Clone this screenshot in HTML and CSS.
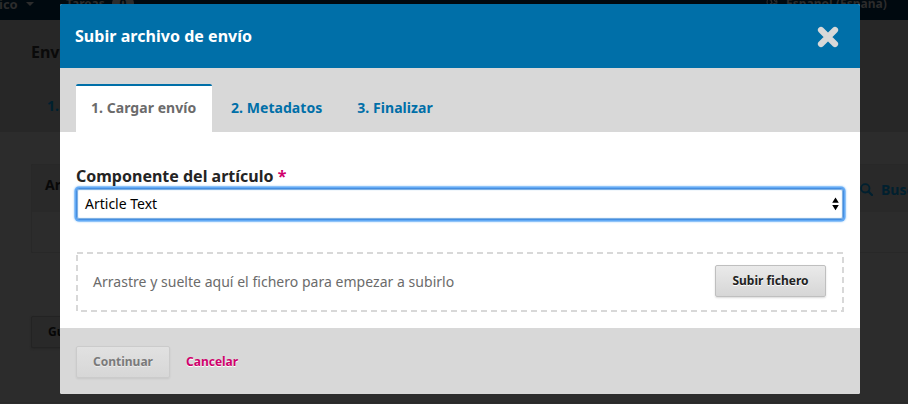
FILE: index.html
```html
<!DOCTYPE html>
<html lang="es">
<head>
<meta charset="utf-8">
<title>Subir archivo de envío</title>
<link rel="stylesheet" href="styles.css">
</head>
<body>
<div class="page">
  <nav class="topbar">
    <span class="site">ico</span><span class="caret"></span>
    <span class="tasks">Tareas</span><span class="count">0</span>
    <svg class="globe" viewBox="0 0 12 12" width="12" height="12"><circle cx="6" cy="6" r="5" fill="none" stroke="currentColor" stroke-width="1"/><path d="M2 3l3 1 1 3-2 1M7 2l2 3 2 1M7 8l3-1" fill="none" stroke="currentColor" stroke-width="1.3"/></svg>
    <span class="lang">Español (España)</span>
  </nav>
  <header class="page-head">
    <h1>Env</h1>
    <div class="page-tab">1.</div>
  </header>
  <main class="page-main">
    <section class="panel">
      <div class="panel-head">
        <h2>Ar</h2>
        <span class="search"><svg viewBox="0 0 13 13" width="13" height="13"><circle cx="5.3" cy="5.3" r="4.2" fill="none" stroke="currentColor" stroke-width="1.8"/><path d="M8.5 8.5L12 12" stroke="currentColor" stroke-width="2.2" stroke-linecap="round"/></svg>Buscar</span>
      </div>
    </section>
    <div class="save">Gu</div>
  </main>
</div>
<div class="modal" role="dialog">
  <header class="modal-head">
    <h2>Subir archivo de envío</h2>
    <svg class="close" viewBox="0 0 22 22" width="22" height="22"><path d="M4 4L18 18M18 4L4 18" stroke="currentColor" stroke-width="6.2" stroke-linecap="round"/></svg>
  </header>
  <nav class="tabs">
    <a class="tab active">1. Cargar envío</a>
    <a class="tab">2. Metadatos</a>
    <a class="tab">3. Finalizar</a>
  </nav>
  <div class="content">
    <label class="label">Componente del artículo <span class="req">*</span></label>
    <div class="select"><span>Article Text</span><svg viewBox="0 0 7 14" width="7" height="14"><path d="M3.5 .5L6.8 5.7H.2zM3.5 13.3L.2 8.1h6.6z" fill="#000"/></svg></div>
    <div class="drop">
      <svg class="dash" width="768" height="60"><rect x="1" y="1" width="766" height="58" fill="none" stroke="#d8d8d8" stroke-width="2" stroke-dasharray="6 4"/></svg>
      <span class="hint">Arrastre y suelte aquí el fichero para empezar a subirlo</span>
      <span class="button upload">Subir fichero</span>
    </div>
  </div>
  <footer class="actions">
    <span class="button continue">Continuar</span>
    <a class="cancel">Cancelar</a>
  </footer>
</div>
</body>
</html>
```
FILE: styles.css
```css
* { box-sizing: border-box; }
body { margin: 0; width: 908px; height: 404px; overflow: hidden; background: #2c2c2c; font-family: "Noto Sans", sans-serif; }
h1, h2 { margin: 0; }
.topbar { height: 20px; background: #00090f; color: #2c2c2c; display: flex; font-size: 12px; font-weight: 700; line-height: 20px; overflow: hidden; }
.topbar > * { flex: none; margin-top: -6px; }
.site { width: 26px; font-size: 13px; text-indent: -1px; }
.topbar .caret { margin-top: 2px; width: 8px; height: 4px; border: 4px solid transparent; border-top-color: #2c2c2c; border-bottom: 0; }
.tasks { margin-left: 32px; width: 40px; }
.count { margin-left: 6px; width: 22px; height: 17px; margin-top: -5px !important; border-radius: 9px; background: #2c2c2c; color: #00090f; text-align: center; line-height: 17px; }
.globe { margin: -4px 8px 0 632px; }
.lang { white-space: nowrap; letter-spacing: .05px; }
.page-head { height: 112px; background: #272727; padding: 22px 0 0 31px; overflow: hidden; }
.page-head h1 { font-size: 16px; line-height: 20px; color: #0a0a0a; }
.page-tab { margin: 34px 0 0 16px; font-size: 14px; line-height: 20px; font-weight: 700; color: #00202f; }
.page-main { height: 271px; padding: 32px 0 0 31px; overflow: hidden; border-bottom: 1px solid #292929; }
.panel { height: 89px; border: 1px solid #282828; border-right: 0; border-radius: 2px 0 0 2px; }
.panel-head { height: 47px; background: #292929; display: flex; align-items: center; justify-content: space-between; padding-left: 13px; overflow: hidden; }
.panel-head h2 { font-size: 14px; line-height: 20px; color: #080808; margin-top: -8px; }
.search { display: flex; align-items: center; gap: 8px; width: 48px; flex: none; color: #00202f; font-size: 14px; font-weight: 700; margin-top: 1px; }
.search svg { flex: none; }
.save { margin-top: 63px; width: 90px; height: 32px; border: 1px solid #232323; border-radius: 2px; background: #292929; padding-left: 16px; font-size: 12px; line-height: 30px; font-weight: 700; color: #060606; box-shadow: 0 1px 2px #262626; }

.modal { position: absolute; left: 60px; top: 4px; width: 800px; height: 390px; background: #fff; border-radius: 2px; overflow: hidden; }
.modal-head { height: 64px; background: #006fa8; color: #fff; padding: 0 21px 0 15px; display: flex; align-items: center; justify-content: space-between; }
.modal-head h2 { font-size: 16px; line-height: 24px; letter-spacing: .04px; }
.close { color: #d8d8d8; margin-top: 1px; }
.tabs { height: 64px; background: #d8d8d8; padding: 16px 16px 0; display: flex; }
.tab { height: 48px; padding: 2px 16px 0; line-height: 44px; font-size: 14px; font-weight: 700; color: #006fa8; white-space: nowrap; letter-spacing: .05px; }
.tab + .tab { margin-left: 3px; }
.active { width: 136px; padding: 0 15px; border-top: 2px solid #006fa8; border-radius: 2px 2px 0 0; background: #fff; color: #6b6b6b; }
.content { height: 196px; padding: 33px 16px 0; }
.label { display: block; font-size: 16px; line-height: 22px; font-weight: 700; color: #242424; white-space: nowrap; }
.req { color: #d0006c; }
.select { margin-top: 1px; height: 32px; border: 1px solid #468ee0; border-radius: 3px; background: #fff; box-shadow: 0 0 0 1.5px #63aaf5, 0 0 2px 2px #a5d0fa, inset 0 0 1px 1px #72a9e2; display: flex; align-items: center; justify-content: space-between; padding: 0 4px 0 8px; font-size: 14px; color: #000; }
.select span { margin-top: -2px; }
.drop { position: relative; height: 60px; margin-top: 32px; display: flex; align-items: center; justify-content: space-between; padding: 0 18px 2px 17px; }
.dash { position: absolute; left: 0; top: 0; }
.hint { font-size: 14px; color: #6b6b6b; white-space: nowrap; letter-spacing: .03px; }
.button { height: 32px; border: 1px solid #bfbfbf; border-radius: 2px; background: linear-gradient(#eaeaea, #d6d6d6); box-shadow: 0 1px 2px rgba(0,0,0,.15); color: #222; font-size: 12px; line-height: 30px; font-weight: 700; text-align: center; text-shadow: 0 1px #fff; }
.upload { width: 111px; }
.actions { height: 66px; background: #d8d8d8; padding: 0 16px; display: flex; align-items: center; }
.continue { width: 94px; margin-top: 2px; background: linear-gradient(#e1e1e1, #d7d7d7); border-color: #cbcbcb; box-shadow: 0 1px 2px rgba(0,0,0,.08); color: #7a7a7a; text-shadow: 0 1px #ececec; }
.cancel { margin: 2px 0 0 16px; font-size: 12px; line-height: 30px; font-weight: 700; color: #d0006c; text-shadow: 0 1px #fff; }
```
